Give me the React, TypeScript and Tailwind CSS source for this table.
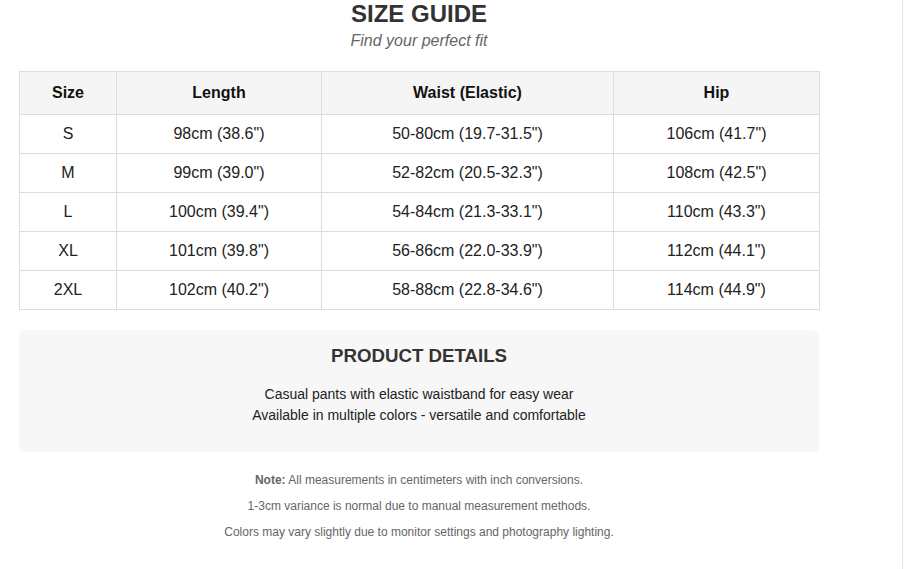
const rows = [
  ['S', '98cm (38.6")', '50-80cm (19.7-31.5")', '106cm (41.7")'],
  ['M', '99cm (39.0")', '52-82cm (20.5-32.3")', '108cm (42.5")'],
  ['L', '100cm (39.4")', '54-84cm (21.3-33.1")', '110cm (43.3")'],
  ['XL', '101cm (39.8")', '56-86cm (22.0-33.9")', '112cm (44.1")'],
  ['2XL', '102cm (40.2")', '58-88cm (22.8-34.6")', '114cm (44.9")'],
];

const headers = ['Size', 'Length', 'Waist (Elastic)', 'Hip'];
const widths = ['w-[97px]', 'w-[205px]', 'w-[292px]', 'w-[206px]'];

const App = () => {
  return (
    <div className="w-[903px] min-h-[569px] border-r border-[#e5e5e5] bg-white font-['Liberation_Sans',Arial,sans-serif]">
      <div className="ml-[19px] w-[800px]">
        <header className="text-center">
          <h1 className="text-[24px] leading-[27px] font-bold text-[#333]">SIZE GUIDE</h1>
          <p className="mt-[2px] text-[16px] leading-[24px] italic text-[#666]">Find your perfect fit</p>
        </header>

        <table className="mt-[18px] w-[800px] border-collapse table-fixed text-[16px] text-[#222]">
          <thead>
            <tr className="bg-[#f5f5f5]">
              {headers.map((h, i) => (
                <th key={h} className={`${widths[i]} h-[43px] border border-[#ddd] text-center font-bold text-[#111]`}>
                  {h}
                </th>
              ))}
            </tr>
          </thead>
          <tbody>
            {rows.map((r) => (
              <tr key={r[0]}>
                {r.map((c, i) => (
                  <td key={i} className="h-[39px] border border-[#ddd] text-center">
                    {c}
                  </td>
                ))}
              </tr>
            ))}
          </tbody>
        </table>

        <section className="mt-[20px] h-[122px] rounded-[6px] bg-[#f7f7f7] text-center pt-[14px]">
          <h2 className="text-[18.7px] leading-[24px] font-bold text-[#333]">PRODUCT DETAILS</h2>
          <div className="mt-[16px] text-[14px] leading-[21px] text-[#222]">
            <p>Casual pants with elastic waistband for easy wear</p>
            <p>Available in multiple colors - versatile and comfortable</p>
          </div>
        </section>

        <footer className="mt-[15px] text-center text-[12px] leading-[26px] text-[#666]">
          <p>
            <strong className="font-bold">Note:</strong> All measurements in centimeters with inch conversions.
          </p>
          <p>1-3cm variance is normal due to manual measurement methods.</p>
          <p>Colors may vary slightly due to monitor settings and photography lighting.</p>
        </footer>
      </div>
    </div>
  );
};

export default App;
